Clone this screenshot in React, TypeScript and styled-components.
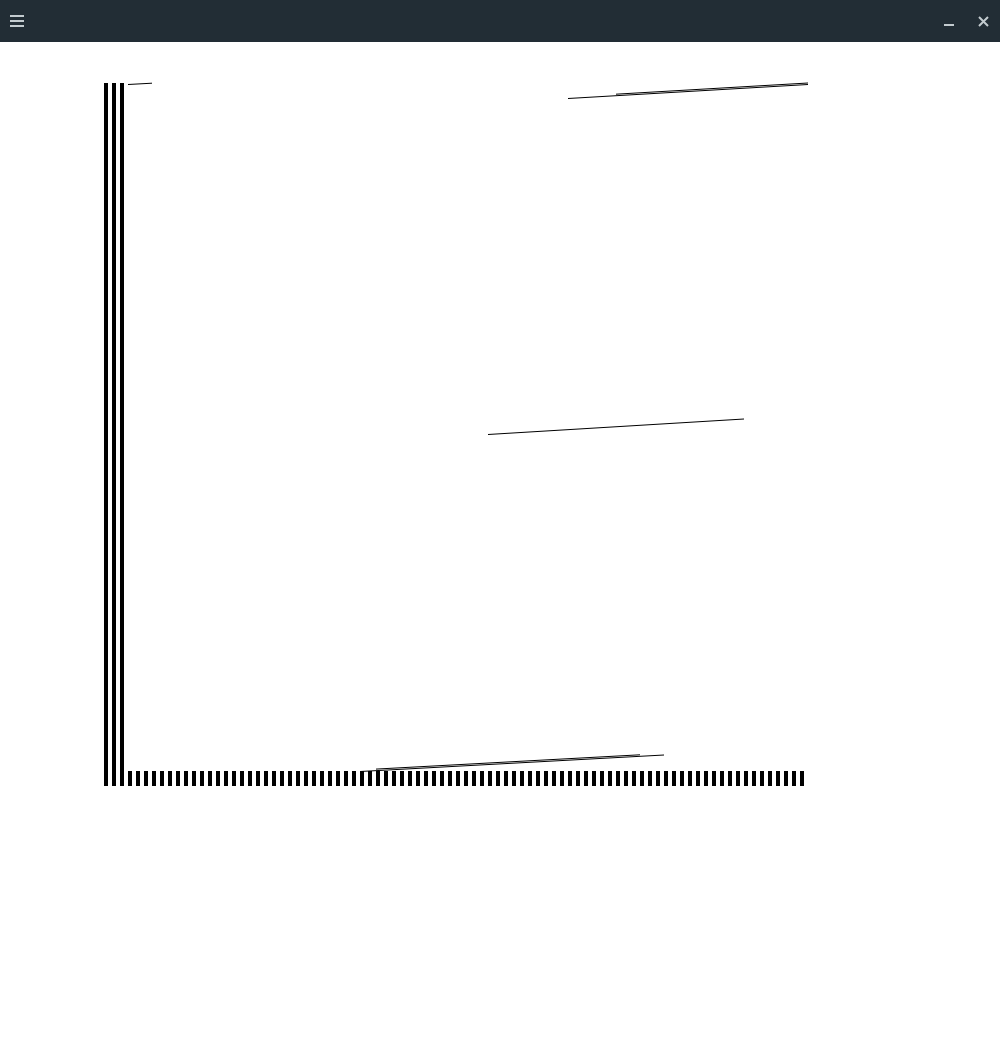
import React from "react";
import styled, { createGlobalStyle } from "styled-components";

const Global = createGlobalStyle`
  html, body { margin: 0; padding: 0; background: #ffffff; }
  body { font-family: "Liberation Sans", Arial, sans-serif; }
`;

const Page = styled.div`
  display: flex;
  flex-direction: column;
  width: 1000px;
  height: 1043px;
  background: #ffffff;
`;

const TitleBar = styled.header`
  display: flex;
  align-items: center;
  justify-content: space-between;
  height: 42px;
  background: #222d35;
  flex-shrink: 0;
`;

const IconButton = styled.button<{ $w?: number }>`
  display: flex;
  align-items: center;
  justify-content: center;
  width: ${(p) => p.$w ?? 34}px;
  height: 42px;
  padding: 0;
  border: none;
  background: transparent;
  color: #c3cbcf;
  cursor: pointer;
`;

const WindowControls = styled.div`
  display: flex;
  align-items: center;
`;

const Canvas = styled.main`
  flex: 1;
  padding: 38px 0 0 100px;
`;

const ChartSvg = styled.svg`
  display: block;
`;

const Menu = () => (
  <svg width="14" height="12" viewBox="0 0 14 12">
    <rect x="0" y="0" width="14" height="2" fill="currentColor" />
    <rect x="0" y="5" width="14" height="2" fill="currentColor" />
    <rect x="0" y="10" width="14" height="2" fill="currentColor" />
  </svg>
);

const Minimize = () => (
  <svg width="10" height="10" viewBox="0 0 10 10">
    <rect x="0" y="8" width="10" height="2" fill="currentColor" />
  </svg>
);

const Close = () => (
  <svg width="11" height="11" viewBox="0 0 11 11">
    <path d="M1 1 L10 10 M10 1 L1 10" stroke="currentColor" strokeWidth="2" />
  </svg>
);

const ticks = Array.from({ length: 85 }, (_, i) => 128 + i * 8);

export default function App() {
  return (
    <>
      <Global />
      <Page>
        <TitleBar>
          <IconButton $w={34}>
            <Menu />
          </IconButton>
          <WindowControls>
            <IconButton $w={34}>
              <Minimize />
            </IconButton>
            <IconButton $w={34}>
              <Close />
            </IconButton>
          </WindowControls>
        </TitleBar>
        <Canvas>
          <ChartSvg width="720" height="710" viewBox="100 80 720 710">
            <g fill="#000" shapeRendering="crispEdges">
              <rect x="104" y="83" width="4" height="703" />
              <rect x="112" y="83" width="4" height="703" />
              <rect x="120" y="83" width="4" height="703" />
              {ticks.map((x) => (
                <rect key={x} x={x} y="771" width="4" height="15" />
              ))}
            </g>
            <g stroke="#000" strokeWidth="1" fill="none">
              <line x1="128" y1="84.5" x2="152" y2="83.2" />
              <line x1="568" y1="98.5" x2="808" y2="84.5" />
              <line x1="616" y1="94.2" x2="808" y2="83" />
              <line x1="488" y1="434.5" x2="744" y2="419" />
              <line x1="360" y1="771.5" x2="664" y2="755" />
              <line x1="376" y1="769.1" x2="640" y2="754.8" />
            </g>
          </ChartSvg>
        </Canvas>
      </Page>
    </>
  );
}
